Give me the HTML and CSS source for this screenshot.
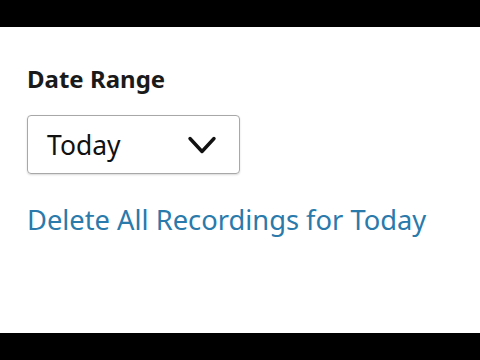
FILE: index.html
```html
<!DOCTYPE html>
<html>
<head>
<meta charset="utf-8">
<link rel="stylesheet" href="styles.css">
</head>
<body>
<div class="screen">
  <div class="bar"></div>
  <main class="content">
    <div class="label">Date Range</div>
    <div class="select">
      <span class="select-value">Today</span>
      <svg class="chevron" width="30" height="20" viewBox="0 0 30 20"><path d="M3 3.5 L15 16.5 L27 3.5" fill="none" stroke="#111" stroke-width="3.4" stroke-linecap="round" stroke-linejoin="round"/></svg>
    </div>
    <a class="link" href="#">Delete All Recordings for Today</a>
  </main>
  <div class="bar"></div>
</div>
</body>
</html>
```
FILE: styles.css
```css
html, body { margin: 0; padding: 0; }
body { width: 480px; height: 360px; overflow: hidden; background: #000; font-family: "Noto Sans", "Open Sans", sans-serif; }
.screen { display: flex; flex-direction: column; height: 360px; }
.bar { height: 27px; background: #000; flex: none; }
.content { flex: 1; background: #fff; padding: 37px 0 0 27px; display: flex; flex-direction: column; align-items: flex-start; }
.label { font-size: 24px; font-weight: 700; color: #1a1a1a; line-height: 30px; }
.select { margin-top: 21px; width: 213px; height: 59px; border: 1px solid #a8a8a8; border-radius: 4px; box-shadow: 0 1px 2px rgba(0,0,0,0.15); display: flex; align-items: center; justify-content: space-between; padding: 0 22px 0 19px; box-sizing: border-box; }
.select-value { font-size: 26.5px; color: #111; }
.chevron { display: block; margin-top: 1px; }
.link { margin-top: 29px; font-size: 27.3px; color: #2a7aab; text-decoration: none; line-height: 34px; }
```
